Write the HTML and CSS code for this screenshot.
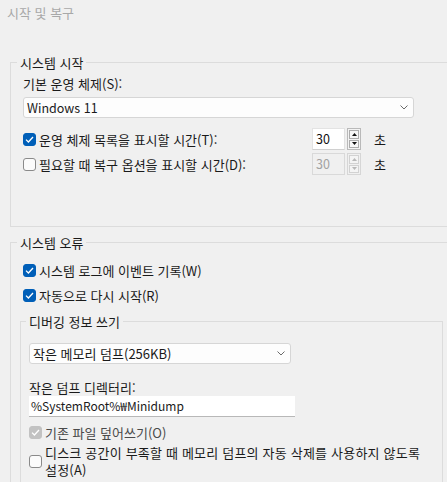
FILE: index.html
```html
<!DOCTYPE html>
<html lang="ko">
<head>
<meta charset="utf-8">
<title>시작 및 복구</title>
<link rel="stylesheet" href="styles.css">
</head>
<body>
<div class="title">시작 및 복구</div>

<fieldset class="group group-start">
  <legend>시스템 시작</legend>
  <div class="inner inner-start">
    <div class="label">기본 운영 체제(S):</div>
    <div class="select select-os">
      <span class="latin">Windows 11</span>
      <svg class="chev" width="8" height="5" viewBox="0 0 8 5"><path d="M0.5 0.5 L4 4 L7.5 0.5" fill="none" stroke="#6a6a6a" stroke-width="1"/></svg>
    </div>
    <div class="spin-rows">
      <div class="spin-row">
        <div class="check">
          <span class="box checked"><svg width="9" height="7" viewBox="0 0 9 7"><path d="M1 3.6 L3.4 6 L8 1" fill="none" stroke="#fff" stroke-width="1.3"/></svg></span>
          <span>운영 체제 목록을 표시할 시간(T):</span>
        </div>
        <div class="spin">
          <div class="num">30</div>
          <div class="arrows">
            <span class="btn"><svg width="5" height="3" viewBox="0 0 5 3"><path d="M0 3 L2.5 0 L5 3 Z" fill="#111"/></svg></span>
            <span class="btn"><svg width="5" height="3" viewBox="0 0 5 3"><path d="M0 0 L2.5 3 L5 0 Z" fill="#111"/></svg></span>
          </div>
        </div>
        <span class="unit">초</span>
      </div>
      <div class="spin-row">
        <div class="check">
          <span class="box"></span>
          <span>필요할 때 복구 옵션을 표시할 시간(D):</span>
        </div>
        <div class="spin disabled">
          <div class="num">30</div>
          <div class="arrows">
            <span class="btn"><svg width="5" height="3" viewBox="0 0 5 3"><path d="M0 3 L2.5 0 L5 3 Z" fill="#b8b8b8"/></svg></span>
            <span class="btn"><svg width="5" height="3" viewBox="0 0 5 3"><path d="M0 0 L2.5 3 L5 0 Z" fill="#b8b8b8"/></svg></span>
          </div>
        </div>
        <span class="unit">초</span>
      </div>
    </div>
  </div>
</fieldset>

<fieldset class="group group-error">
  <legend>시스템 오류</legend>
  <div class="inner inner-error">
    <div class="check row-log">
      <span class="box checked"><svg width="9" height="7" viewBox="0 0 9 7"><path d="M1 3.6 L3.4 6 L8 1" fill="none" stroke="#fff" stroke-width="1.3"/></svg></span>
      <span>시스템 로그에 이벤트 기록(W)</span>
    </div>
    <div class="check row-restart">
      <span class="box checked"><svg width="9" height="7" viewBox="0 0 9 7"><path d="M1 3.6 L3.4 6 L8 1" fill="none" stroke="#fff" stroke-width="1.3"/></svg></span>
      <span>자동으로 다시 시작(R)</span>
    </div>

    <fieldset class="subgroup">
      <legend>디버깅 정보 쓰기</legend>
      <div class="inner inner-debug">
        <div class="select select-dump">
          <span>작은 메모리 덤프(256KB)</span>
          <svg class="chev" width="8" height="5" viewBox="0 0 8 5"><path d="M0.5 0.5 L4 4 L7.5 0.5" fill="none" stroke="#6a6a6a" stroke-width="1"/></svg>
        </div>
        <div class="label label-dir">작은 덤프 디렉터리:</div>
        <div class="textbox">%SystemRoot%₩Minidump</div>
        <div class="check row-overwrite">
          <span class="box checked disabled"><svg width="9" height="7" viewBox="0 0 9 7"><path d="M1 3.6 L3.4 6 L8 1" fill="none" stroke="#fff" stroke-width="1.3"/></svg></span>
          <span class="muted">기존 파일 덮어쓰기(O)</span>
        </div>
        <div class="check row-disk">
          <span class="box"></span>
          <span class="wrap">디스크 공간이 부족할 때 메모리 덤프의 자동 삭제를 사용하지 않도록 설정(A)</span>
        </div>
      </div>
    </fieldset>
  </div>
</fieldset>
</body>
</html>
```

FILE: styles.css
```css
html, body {
  margin: 0;
  padding: 0;
  background: #f0f0f0;
}

body {
  width: 447px;
  height: 482px;
  overflow: hidden;
  font-family: "Noto Sans CJK KR", "Noto Sans", sans-serif;
  font-size: 13px;
  line-height: 17px;
  color: #1a1a1a;
}

.title {
  color: #a8a8a8;
  padding: 4px 0 0 7px;
  line-height: 17px;
}

fieldset {
  border: 1px solid #dcdcdc;
  margin: 0;
  padding: 0 0 0 6px;
  min-width: 0;
  box-sizing: border-box;
}

legend {
  padding: 0 3px;
  line-height: 17px;
}

.group {
  margin-left: 10px;
  margin-right: -40px;
}

.group-start {
  margin-top: 33px;
  padding-bottom: 51px;
}

.group-error {
  margin-top: 7px;
  padding-bottom: 20px;
}

.inner-start {
  padding: 4px 0 0 6px;
}

.inner-error {
  padding: 11px 0 0 6px;
}

.label {
  line-height: 17px;
}

.latin {
  font-size: 12.5px;
}

.select {
  display: flex;
  align-items: center;
  justify-content: space-between;
  box-sizing: border-box;
  height: 21px;
  padding: 0 5px 0 3px;
  background: #fdfdfd;
  border: 1px solid #d6d6d6;
  border-radius: 3px;
}

.select-os {
  width: 391px;
  margin-top: 5px;
}

.chev {
  display: block;
}

.spin-rows {
  display: flex;
  flex-direction: column;
  gap: 3px;
  margin-top: 10px;
}

.spin-row {
  display: flex;
  align-items: center;
  height: 22px;
}

.spin-row .check {
  width: 289px;
}

.check {
  display: flex;
  align-items: center;
  gap: 3px;
}

.box {
  flex: 0 0 auto;
  display: flex;
  align-items: center;
  justify-content: center;
  width: 13px;
  height: 13px;
  box-sizing: border-box;
  border: 1px solid #8a8a8a;
  border-radius: 3px;
  background: #fbfbfb;
}

.box.checked {
  border-color: #005fb8;
  background: #005fb8;
}

.box.checked.disabled {
  border-color: #c2c2c2;
  background: #c2c2c2;
}

.box svg {
  display: block;
}

.spin {
  display: flex;
  height: 22px;
}

.num {
  box-sizing: border-box;
  width: 33px;
  height: 22px;
  padding: 0 0 0 3px;
  background: #ffffff;
  border: 1px solid #e3e3e3;
  border-bottom-color: #d0d0d0;
  line-height: 20px;
  font-size: 12.5px;
  color: #111;
}

.arrows {
  display: flex;
  flex-direction: column;
  gap: 1px;
  box-sizing: border-box;
  width: 14px;
  margin-left: 2px;
  padding: 1px;
  border: 1px solid #b9b9b9;
  background: #f3f3f3;
}

.btn {
  flex: 1;
  display: flex;
  align-items: center;
  justify-content: center;
  border: 1px solid #adadad;
  background: #f7f7f7;
}

.btn svg {
  display: block;
}

.spin.disabled .num {
  background: #f0f0f0;
  border-color: #d9d9d9;
  color: #a2a2a2;
}

.spin.disabled .arrows {
  border-color: #d6d6d6;
  background: #f0f0f0;
}

.spin.disabled .btn {
  border-color: #d2d2d2;
  background: #f4f4f4;
}

.unit {
  margin-left: 13px;
}

.row-restart {
  margin-top: 8px;
}

.subgroup {
  width: 423px;
  margin: 9px 0 0 -3px;
  padding: 0 0 0 5px;
}

.inner-debug {
  padding: 13px 0 40px 3px;
}

.select-dump {
  width: 262px;
}

.label-dir {
  margin-top: 16px;
  line-height: 15px;
}

.textbox {
  box-sizing: border-box;
  width: 266px;
  height: 21px;
  margin-top: 1px;
  padding: 0 0 0 2px;
  background: #ffffff;
  border-bottom: 1px solid #b8b8b8;
  line-height: 20px;
  font-size: 12px;
}

.row-overwrite {
  margin-top: 7px;
}

.muted {
  color: #4a4a4a;
}

.row-disk {
  margin-top: 3px;
}

.wrap {
  max-width: 380px;
  word-break: keep-all;
  letter-spacing: 0.2px;
}
```
